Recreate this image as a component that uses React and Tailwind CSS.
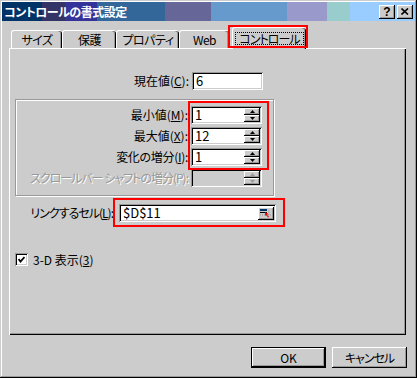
import React from "react";

const field = "shadow-[inset_1px_1px_#999999,inset_-1px_-1px_#ffffff,inset_2px_2px_#000000,inset_-2px_-2px_#cccccc]";
const raised = "shadow-[inset_-1px_-1px_#000000,inset_1px_1px_#ffffff,inset_-2px_-2px_#999999,inset_2px_2px_#cccccc]";

const Arrow = ({ up, disabled }) => (
  <svg width="5" height="3" viewBox="0 0 5 3" className="block">
    {up ? (
      <polygon points="2.5,0 5,3 0,3" fill={disabled ? "#999999" : "#000000"} />
    ) : (
      <polygon points="0,0 5,0 2.5,3" fill={disabled ? "#999999" : "#000000"} />
    )}
  </svg>
);

const Spinner = ({ value, disabled }) => (
  <div className={`flex h-[18px] w-[71px] p-[2px] ${field} ${disabled ? "bg-[#cccccc]" : "bg-white"}`}>
    <div className="flex-1 pl-[2px] text-[13px] leading-[14px] text-black">{value}</div>
    <div className="flex w-[16px] flex-col">
      <div className={`flex h-[7px] items-center justify-center bg-[#cccccc] ${raised}`}>
        <Arrow up disabled={disabled} />
      </div>
      <div className={`flex h-[7px] items-center justify-center bg-[#cccccc] ${raised}`}>
        <Arrow disabled={disabled} />
      </div>
    </div>
  </div>
);

const Tab = ({ label, width }) => (
  <div
    className={`flex h-[18px] items-center justify-center rounded-t-[3px] border-l border-t border-white bg-[#cccccc] tracking-[-0.5px] shadow-[inset_-1px_0_#000000,inset_-2px_0_#999999] ${width}`}
  >
    {label}
  </div>
);

const App = () => {
  return (
    <div className="h-[378px] w-[417px] bg-[#cccccc] p-[2px] font-['Noto_Sans_CJK_JP',sans-serif] text-[12px] leading-[18px] text-black [font-feature-settings:'palt'] shadow-[inset_-1px_-1px_#000000,inset_1px_1px_#cccccc,inset_-2px_-2px_#999999,inset_2px_2px_#ffffff]">
      <div className="flex h-[19px] items-center justify-between bg-[linear-gradient(90deg,#003366_0_40px,#333366_40px_63px,#333399_63px_95px,#336699_95px_163px,#666699_163px_209px,#6699cc_209px_285px,#9999cc_285px_325px,#99cccc_325px_348px,#99ccff_348px)] pl-[2px] pr-[2px]">
        <span className="text-[12px] font-bold tracking-[-0.5px] text-white">コントロールの書式設定</span>
        <div className="flex gap-[2px]">
          <div className={`flex h-[14px] w-[16px] items-center justify-center bg-[#cccccc] text-[12px] font-bold leading-none ${raised}`}>
            <span className="font-['Liberation_Sans',sans-serif]">?</span>
          </div>
          <div className={`flex h-[14px] w-[16px] items-center justify-center bg-[#cccccc] ${raised}`}>
            <svg width="8" height="7" viewBox="0 0 8 7">
              <path d="M0.5 0.5 L7 6.5 M7 0.5 L0.5 6.5" stroke="#000" strokeWidth="1.6" />
            </svg>
          </div>
        </div>
      </div>

      <div className="relative mt-[6px] flex h-[21px] items-end pl-[9px]">
        <Tab label="サイズ" width="w-[51px]" />
        <Tab label="保護" width="w-[54px]" />
        <Tab label="プロパティ" width="w-[63px]" />
        <Tab label="Web" width="w-[50px]" />
        <div className="relative z-10 mb-[-1px] ml-[3px] h-[22px] w-[74px] rounded-t-[3px] border-l border-t border-white bg-[#cccccc] pl-[2px] pt-[4px] shadow-[inset_-1px_0_#000000,inset_-2px_0_#999999]">
          <div className="flex h-[13px] w-[69px] items-center justify-center border border-dotted border-black leading-[12px] tracking-[-1px]">
            コントロール
          </div>
        </div>
        <div className="absolute left-[226px] top-[-2px] z-20 h-[23px] w-[80px] border-2 border-[#ff0000]"></div>
      </div>

      <div className="relative ml-[7px] h-[287px] w-[397px] bg-[#cccccc] pt-[24px] shadow-[inset_1px_1px_#ffffff,inset_-1px_-1px_#000000,inset_-2px_-2px_#999999]">
        <div className="flex h-[18px] items-center">
          <div className="w-[183px] pr-[3px] text-right">
            現在値(<u>C</u>):
          </div>
          <div className={`h-[18px] w-[71px] bg-white pl-[4px] text-[13px] leading-[18px] ${field}`}>6</div>
        </div>

        <div className="ml-[6px] mt-[9px] flex h-[97px] w-[259px] flex-col gap-[3px] border border-[#999999] pt-[6px] shadow-[1px_1px_0_#ffffff,inset_1px_1px_0_#ffffff]">
          <div className="flex h-[18px] items-center">
            <div className="w-[175px] pr-[3px] text-right">
              最小値(<u>M</u>):
            </div>
            <Spinner value="1" />
          </div>
          <div className="flex h-[18px] items-center">
            <div className="w-[175px] pr-[3px] text-right">
              最大値(<u>X</u>):
            </div>
            <Spinner value="12" />
          </div>
          <div className="flex h-[18px] items-center">
            <div className="w-[175px] pr-[3px] text-right tracking-[-0.3px]">
              変化の増分(<u>I</u>):
            </div>
            <Spinner value="1" />
          </div>
          <div className="flex h-[18px] items-center">
            <div className="w-[175px] whitespace-nowrap pr-[3px] text-right tracking-[-1px] text-[#999999] [text-shadow:1px_1px_0_#ffffff]">
              スクロールバー シャフトの増分(P):
            </div>
            <Spinner value="" disabled />
          </div>
        </div>

        <div className="mt-[8px] flex h-[18px] items-center">
          <div className="w-[110px] pr-[6px] text-right tracking-[-1px]">
            リンクするセル(<u>L</u>):
          </div>
          <div className={`flex h-[18px] w-[157px] items-center bg-white p-[2px] ${field}`}>
            <div className="flex-1 pl-[2px] text-[13px] leading-[14px]">$D$11</div>
            <div className={`flex h-[13px] w-[16px] items-center justify-center bg-[#cccccc] ${raised}`}>
              <svg width="12" height="9" viewBox="0 0 12 9">
                <rect x="0" y="0" width="7" height="2" fill="#003366" />
                <rect x="0" y="3" width="7" height="1" fill="#000000" />
                <path d="M9 1 V9" stroke="#999999" strokeWidth="1" strokeDasharray="1 1" />
                <path d="M0 6 H12" stroke="#999999" strokeWidth="1" strokeDasharray="1 1" />
                <path d="M5 3 L5 7 L6 6 L8 8.5 L9 8 L7 5.5 L8.5 5 Z" fill="#ff0000" />
              </svg>
            </div>
          </div>
        </div>

        <div className="ml-[6px] mt-[31px] flex h-[13px] items-center">
          <div className={`flex h-[13px] w-[13px] items-center justify-center bg-white ${field}`}>
            <svg width="7" height="7" viewBox="0 0 7 7">
              <path d="M0.5 3 L2.5 5.5 L6.5 1" stroke="#000" strokeWidth="1.8" fill="none" />
            </svg>
          </div>
          <span className="ml-[5px]">
            3-D 表示(<u>3</u>)
          </span>
        </div>

        <div className="absolute left-[179px] top-[53px] h-[69px] w-[81px] border-2 border-[#ff0000]"></div>
        <div className="absolute left-[104px] top-[150px] h-[29px] w-[172px] border-2 border-[#ff0000]"></div>
      </div>

      <div className="mt-[12px] flex justify-end gap-[6px] pr-[8px]">
        <div className="h-[21px] w-[75px] border border-black">
          <div className={`flex h-full w-full items-center justify-center bg-[#cccccc] ${raised}`}>OK</div>
        </div>
        <div className={`flex h-[21px] w-[75px] items-center justify-center bg-[#cccccc] tracking-[-1px] ${raised}`}>キャンセル</div>
      </div>
    </div>
  );
};

export default App;
